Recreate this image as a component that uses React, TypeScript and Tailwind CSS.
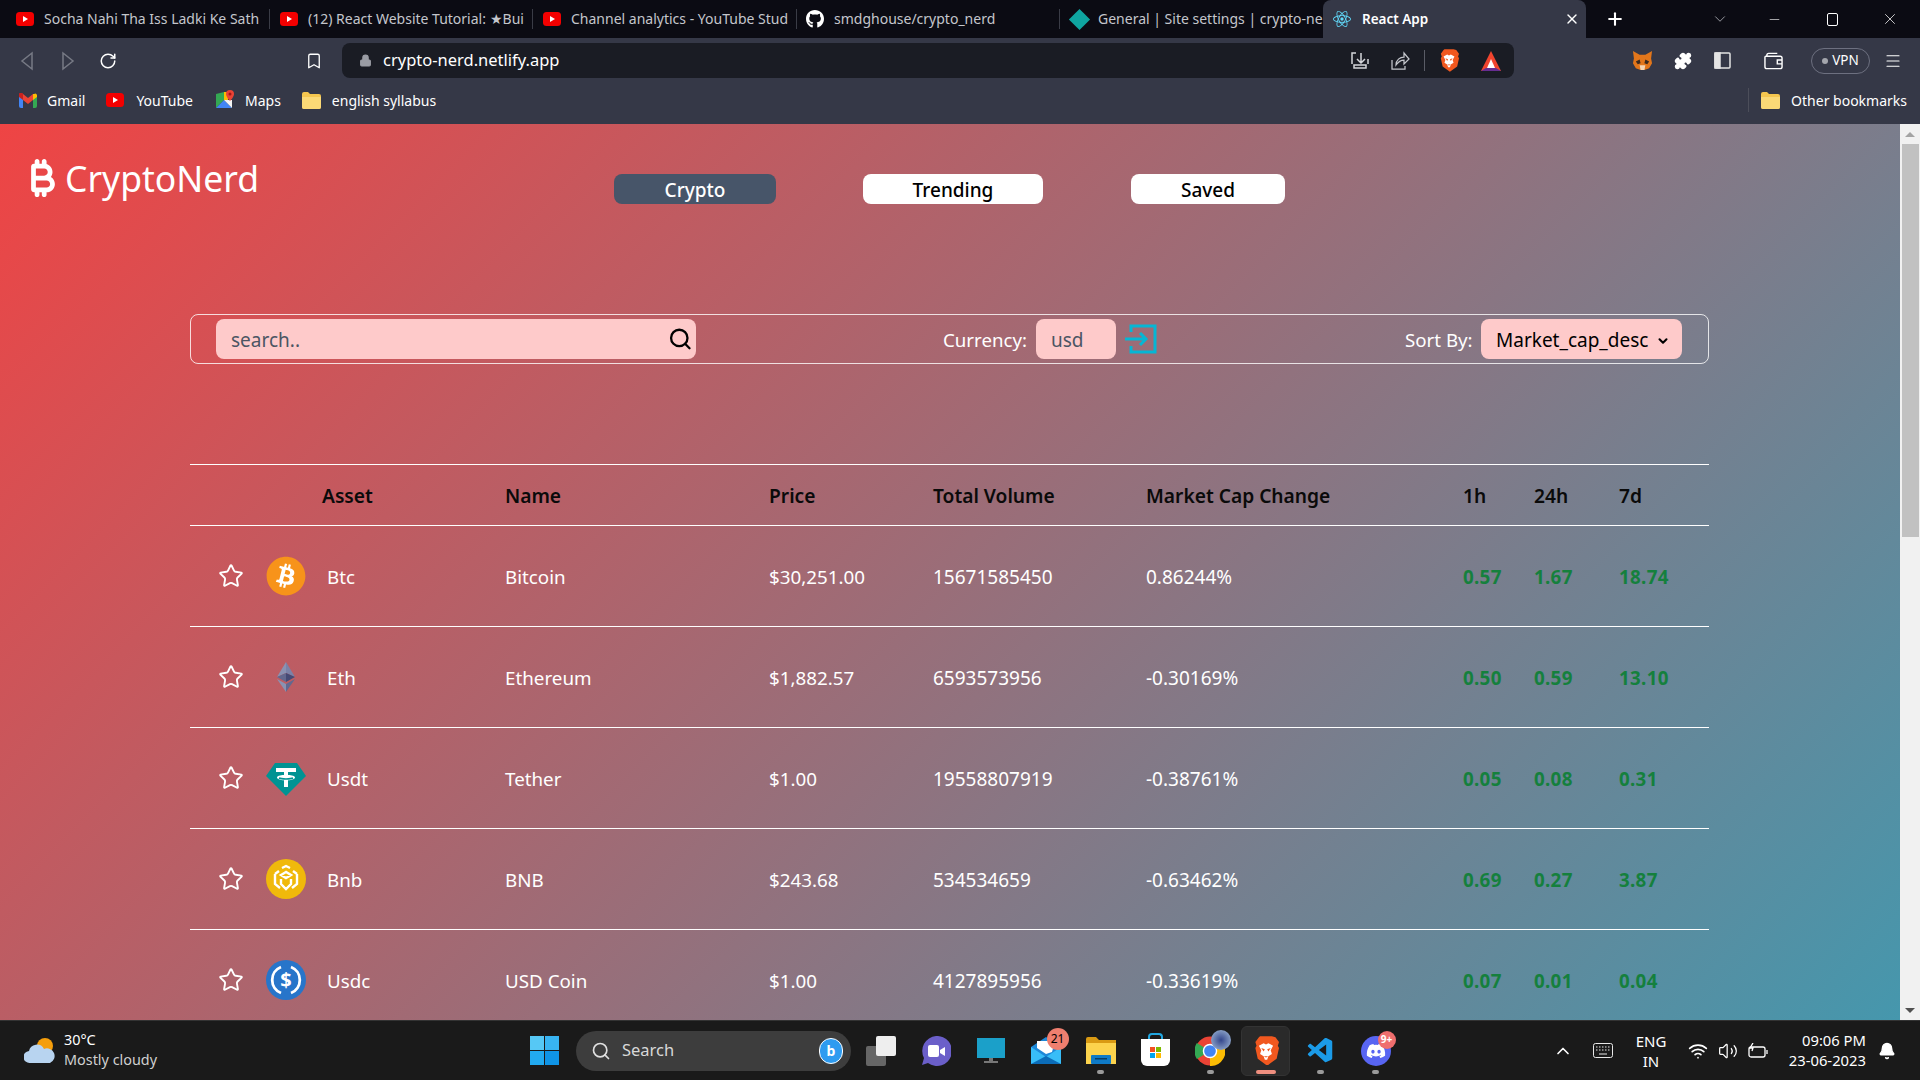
import React from "react";
import { Bell, ChevronDown, ChevronUp, Lock, Bookmark, Menu, Minus, Plus, RotateCw, Search, Star, Volume2, Wifi, X, Puzzle } from "lucide-react";
import { FaBitcoin, FaGithub, FaBitcoinSign, FaDiscord } from "react-icons/fa6";
import { SiReact } from "react-icons/si";
import { VscVscode } from "react-icons/vsc";

const font = { fontFamily: '"Noto Sans", sans-serif' };

const coins = [
  { sym: "Btc", name: "Bitcoin", price: "$30,251.00", vol: "15671585450", cap: "0.86244%", h1: "0.57", h24: "1.67", d7: "18.74" },
  { sym: "Eth", name: "Ethereum", price: "$1,882.57", vol: "6593573956", cap: "-0.30169%", h1: "0.50", h24: "0.59", d7: "13.10" },
  { sym: "Usdt", name: "Tether", price: "$1.00", vol: "19558807919", cap: "-0.38761%", h1: "0.05", h24: "0.08", d7: "0.31" },
  { sym: "Bnb", name: "BNB", price: "$243.68", vol: "534534659", cap: "-0.63462%", h1: "0.69", h24: "0.27", d7: "3.87" },
  { sym: "Usdc", name: "USD Coin", price: "$1.00", vol: "4127895956", cap: "-0.33619%", h1: "0.07", h24: "0.01", d7: "0.04" },
];

const Yt = () => (
  <svg width="18" height="14" viewBox="0 0 18 14" className="shrink-0">
    <rect width="18" height="14" rx="3.5" fill="#f40000" />
    <path d="M7 4l5 3-5 3z" fill="#fff" />
  </svg>
);

const Folder = () => (
  <svg width="19" height="17" viewBox="0 0 19 17" className="shrink-0">
    <path d="M0 2a2 2 0 012-2h4l2 2h9a2 2 0 012 2v11a2 2 0 01-2 2H2a2 2 0 01-2-2z" fill="#f5c64f" />
    <path d="M0 5h19v10a2 2 0 01-2 2H2a2 2 0 01-2-2z" fill="#fbd976" />
  </svg>
);

const Gmail = () => (
  <svg width="18" height="15" viewBox="0 0 18 15" className="shrink-0">
    <path d="M0 2v11a2 2 0 002 2h2V6z" fill="#4285f4" />
    <path d="M18 2v11a2 2 0 01-2 2h-2V6z" fill="#34a853" />
    <path d="M14 1v6l4-3V2a2 2 0 00-3-1z" fill="#fbbc04" />
    <path d="M4 7V1l5 4 5-4v6l-5 4z" fill="#ea4335" />
    <path d="M0 2v2l4 3V1a2 2 0 00-4 1z" fill="#c5221f" />
  </svg>
);

const Maps = () => (
  <svg width="18" height="20" viewBox="0 0 18 20" className="shrink-0">
    <path d="M0 4l8-2v8L0 18z" fill="#34a853" />
    <path d="M0 18l8-8 8 8z" fill="#4285f4" />
    <path d="M8 10l8 8V10z" fill="#f4f4f4" />
    <path d="M8 2l4 0v8H8z" fill="#fbbc04" />
    <path d="M14 0a4 4 0 014 4c0 3-4 7-4 7s-4-4-4-7a4 4 0 014-4z" fill="#ea4335" />
    <circle cx="14" cy="4" r="1.5" fill="#a31515" />
  </svg>
);

const Brave = ({ size = 20 }: { size?: number }) => (
  <svg width={size} height={size * 1.15} viewBox="0 0 22 25" className="shrink-0">
    <path d="M6 0h10l3 1 3 4-1 3 1 2-2 9-8 6-8-6-2-9 1-2-1-3 3-4z" fill="#f1581f" />
    <path d="M5 8l4-2 2 1 2-1 4 2-2 4 1 3-3 2-1 3h-2l-1-3-3-2 1-3z" fill="#fff" />
    <path d="M7 10l3 1-1 2zM15 10l-3 1 1 2z" fill="#f1581f" />
    <path d="M9 17h4l-2 1z" fill="#f1581f" />
  </svg>
);

const Tab = ({ icon, label, w, last }: { icon: React.ReactNode; label: string; w: string; last?: boolean }) => (
  <div className={`flex items-center h-[38px] overflow-hidden ${w}`}>
    <div className="flex h-[18px] w-full items-center">
      <div className="w-[18px] flex justify-center shrink-0">{icon}</div>
      <span className="ml-[10px] -mt-[1px] text-[14px] text-[#c4c6cc] whitespace-nowrap overflow-hidden w-full">{label}</span>
      {!last && <div className="w-px h-[20px] bg-[#3a3c46] shrink-0" />}
    </div>
  </div>
);

const Browser = () => (
  <div className="bg-[#353847]">
    <div className="flex h-[38px] bg-[#0b0b13] items-center">
      <Tab w="w-[270px] pl-[16px]" icon={<Yt />} label="Socha Nahi Tha Iss Ladki Ke Sath" />
      <Tab w="w-[263px] pl-[10px]" icon={<Yt />} label="(12) React Website Tutorial: ★Bui" />
      <Tab w="w-[264px] pl-[10px]" icon={<Yt />} label="Channel analytics - YouTube Stud" />
      <Tab w="w-[263px] pl-[9px]" icon={<FaGithub className="text-white" size={20} />} label="smdghouse/crypto_nerd" />
      <Tab w="w-[263px] pl-[10px]" last icon={<div className="w-[15px] h-[15px] rotate-45 bg-[#0fa5a0]" />} label="General | Site settings | crypto-ne" />
      <div className="flex items-center w-[263px] h-[38px] bg-[#353847] rounded-t-lg pl-[10px] pr-[6px]">
        <SiReact className="text-[#61dafb]" size={18} />
        <span className="ml-[11px] text-[13.5px] font-semibold text-white">React App</span>
        <X className="ml-auto text-white" size={16} />
      </div>
      <Plus className="ml-[19px] text-white" size={20} strokeWidth={2.5} />
      <ChevronDown className="ml-[86px] text-[#c4c6cc]" size={18} strokeWidth={1} />
      <Minus className="ml-[38px] text-white" size={15} strokeWidth={1} />
      <div className="ml-[45px] w-[11px] h-[13px] border border-white rounded-[2px]" />
      <X className="ml-[43px] text-white" size={18} strokeWidth={1} />
    </div>
    <div className="flex h-[45px] items-center">
      <svg width="14" height="20" viewBox="0 0 14 20" className="ml-[20px]" fill="none" stroke="#777a85" strokeWidth="1.5">
        <path d="M12 2L2 10l10 8z" />
      </svg>
      <svg width="14" height="20" viewBox="0 0 14 20" className="ml-[27px]" fill="none" stroke="#777a85" strokeWidth="1.5">
        <path d="M2 2l10 8-10 8z" />
      </svg>
      <RotateCw className="ml-[24px] text-white" size={18} strokeWidth={2} />
      <Bookmark className="ml-[188px] text-white" size={18} strokeWidth={1.75} />
      <div className="ml-[19px] flex items-center w-[1172px] h-[35px] bg-[#1a1c24] rounded-lg pl-[17px]">
        <Lock className="text-[#9a9ca4] fill-[#9a9ca4]" size={13} />
        <span className="ml-[11px] text-[16.5px] text-white">crypto-nerd.netlify.app</span>
        <svg width="18" height="20" viewBox="0 0 18 20" className="ml-[792px]" fill="none" stroke="#d4d5d9" strokeWidth="1.5">
          <path d="M1 13V2h4M17 8v5M10 2v10M6 8l4 4 4-4M3 14h12v3H3z" />
        </svg>
        <svg width="19" height="20" viewBox="0 0 19 20" className="ml-[22px]" fill="none" stroke="#c4c6cc" strokeWidth="1.25">
          <path d="M1 9v9h13v-3M5 14c0-5 4-8 8-8V2l5 6-5 5V9c-3 0-6 2-8 5z" />
        </svg>
        <div className="ml-[14px] w-px h-[21px] bg-[#5a5c66]" />
        <div className="ml-[14px]">
          <Brave />
        </div>
        <svg width="22" height="22" viewBox="0 0 22 22" className="ml-[21px]">
          <path d="M11 1l10 20H1z" fill="#f1442e" />
          <path d="M1 21l5-3h10l5 3z" fill="#662d91" />
          <path d="M11 9l4 9H7z" fill="#fff" />
        </svg>
      </div>
      <svg width="21" height="21" viewBox="0 0 22 22" className="ml-[118px]">
        <path d="M1 1l7 4h6l7-4-1 8 1 5-3 5-5 2h-4l-5-2-3-5 1-5z" fill="#e2761b" />
        <path d="M4 12l4-2 1 4-3 1zM18 12l-4-2-1 4 3 1z" fill="#3b2a1f" />
        <path d="M8 16h6l-1 5H9z" fill="#f5d6b5" />
      </svg>
      <Puzzle className="ml-[21px] text-white fill-white" size={18} />
      <svg width="17" height="17" viewBox="0 0 17 17" className="ml-[22px]" fill="none" stroke="#e4e4e4" strokeWidth="1.5">
        <rect x="1" y="1" width="15" height="15" rx="1" />
        <rect x="1" y="1" width="5" height="15" fill="#e4e4e4" />
      </svg>
      <svg width="19" height="18" viewBox="0 0 20 18" className="ml-[33px]" fill="none" stroke="#fff" strokeWidth="1.5">
        <path d="M3 4V3a2 2 0 012-2h9M1 5a1 1 0 011-1h15a2 2 0 012 2v9a2 2 0 01-2 2H3a2 2 0 01-2-2zM19 8h-5v4h5" />
      </svg>
      <div className="ml-[28px] flex items-center justify-center w-[59px] h-[26px] rounded-full border border-[#6d7080] text-[13.5px] text-white gap-[4px]">
        <span className="w-[6px] h-[6px] rounded-full bg-[#a4a6ad]" />
        VPN
      </div>
      <Menu className="ml-[14px] text-white" size={18} strokeWidth={1.5} />
    </div>
    <div className="flex h-[41px] items-center pb-[7px] text-[14px] text-white">
      <div className="ml-[19px]">
        <Gmail />
      </div>
      <span className="ml-[10px]">Gmail</span>
      <div className="ml-[21px]">
        <Yt />
      </div>
      <span className="ml-[12px]">YouTube</span>
      <div className="ml-[23px]">
        <Maps />
      </div>
      <span className="ml-[11px]">Maps</span>
      <div className="ml-[21px]">
        <Folder />
      </div>
      <span className="ml-[11px]">english syllabus</span>
      <div className="ml-auto w-px h-[24px] bg-[#4c4e5a]" />
      <div className="ml-[12px]">
        <Folder />
      </div>
      <span className="ml-[11px] mr-[13px]">Other bookmarks</span>
    </div>
  </div>
);

const CoinIcon = ({ sym }: { sym: string }) => {
  if (sym === "Btc")
    return (
      <div className="relative w-[40px] h-[40px]">
        <div className="absolute inset-[6px] rounded-full bg-white" />
        <FaBitcoin className="relative text-[#f7931a]" size={40} />
      </div>
    );
  if (sym === "Eth")
    return (
      <svg width="40" height="40" viewBox="0 0 40 40">
        <path d="M20 5l-9 15 9-4z" fill="#8a92b2" />
        <path d="M20 5l9 15-9-4z" fill="#7b82a8" />
        <path d="M11 20l9 5V16z" fill="#62688f" />
        <path d="M29 20l-9 5V16z" fill="#454a75" />
        <path d="M11 22l9 13v-8z" fill="#8a92b2" />
        <path d="M29 22l-9 13v-8z" fill="#62688f" />
      </svg>
    );
  if (sym === "Usdt")
    return (
      <svg width="40" height="40" viewBox="0 0 40 40">
        <path d="M9 5h22l9 13-20 20L0 18z" fill="#009393" />
        <path d="M10 10h20v4h-8v3c4 0 7 1 7 2.500s-3 2.500-7 2.800V29h-4v-6.700c-4-.3-7-1.300-7-2.800s3-2.500 7-2.500v-3h-8z" fill="#fff" />
        <path d="M13 20c2 1.200 12 1.200 14 0" stroke="#009393" strokeWidth="1.500" fill="none" />
      </svg>
    );
  if (sym === "Bnb")
    return (
      <svg width="40" height="40" viewBox="0 0 40 40">
        <circle cx="20" cy="20" r="20" fill="#f0b90b" />
        <path
          d="M16 9l4-2 4 2M20 13l-5 3 5 3 5-3zM9 15v10l5 4M31 15v10l-5 4M15 20v5l5 5 5-5v-5M9 15l4-3M31 15l-4-3"
          stroke="#fff"
          strokeWidth="2.400"
          fill="none"
        />
      </svg>
    );
  return (
    <svg width="40" height="40" viewBox="0 0 40 40">
      <circle cx="20" cy="20" r="20" fill="#2775ca" />
      <path d="M15 7a14 14 0 000 26M25 7a14 14 0 010 26" stroke="#fff" strokeWidth="2.800" fill="none" />
      <text x="20" y="27" textAnchor="middle" fontSize="20" fontWeight="700" fill="#fff" fontFamily="Noto Sans">
        $
      </text>
    </svg>
  );
};

const Page = () => (
  <div className="min-h-[1960px] bg-[linear-gradient(to_bottom_right,#ef4444,#06b6d4)]" style={font}>
    <div className="flex h-[80px] pl-[24px]">
      <div className="flex items-center w-[590px] h-[50px] mt-[29px] text-white">
        <FaBitcoinSign size={38} />
        <span className="ml-[3px] text-[35.5px] leading-[50px]">CryptoNerd</span>
      </div>
      <button className="w-[162px] h-[30px] mt-[50px] bg-[#475569] text-white text-[19px] font-medium rounded-lg leading-[32px]">Crypto</button>
      <button className="ml-[87px] w-[180px] h-[30px] mt-[50px] bg-white text-black text-[19px] font-medium rounded-lg leading-[32px]">Trending</button>
      <button className="ml-[88px] w-[154px] h-[30px] mt-[50px] bg-white text-black text-[19px] font-medium rounded-lg leading-[32px]">Saved</button>
    </div>
    <div className="ml-[190px] mt-[110px] w-[1519px] h-[50px] border border-white/80 rounded-lg flex items-center pl-[25px]">
      <div className="flex items-center w-[480px] h-[40px] bg-[#fecaca] rounded-lg pl-[15px] pr-[3px]">
        <input placeholder="search.." className="w-full text-[19px] pt-[3px] outline-none placeholder:text-[#4b5563]" style={font} />
        <Search className="text-black" size={26} strokeWidth={2.25} />
      </div>
      <span className="ml-[247px] pt-[3px] w-[85px] whitespace-nowrap text-[18.7px] text-white">Currency:</span>
      <div className="ml-[8px] flex items-center w-[80px] h-[40px] bg-[#fecaca] rounded-lg pl-[15px] pt-[3px] text-[19px] text-[#4b5563]">usd</div>
      <svg width="32" height="30" viewBox="0 0 32 30" className="ml-[9px]" fill="none" stroke="#06b6d4" strokeWidth="3">
        <path d="M6 8V2h24v26H6v-6M0 15h21M15 9l6 6-6 6" />
      </svg>
      <span className="ml-[248px] pt-[3px] w-[68px] whitespace-nowrap text-[18.7px] text-white">Sort By:</span>
      <div className="ml-[8px] flex items-center w-[201px] h-[40px] bg-[#fecaca] rounded-lg pl-[15px] pt-[3px] text-[19px] text-black">
        Market_cap_desc
        <ChevronDown className="ml-[8px]" size={14} strokeWidth={3.5} />
      </div>
    </div>
    <div className="ml-[190px] mt-[100px] w-[1519px] border-t border-white">
      <div className="grid h-[61px] pt-[2px] items-center border-b border-white text-[19.2px] font-semibold text-[#0a0a0a] grid-cols-[132px_183px_264px_164px_213px_317px_71px_85px_90px]">
        <span />
        <span>Asset</span>
        <span>Name</span>
        <span>Price</span>
        <span>Total Volume</span>
        <span>Market Cap Change</span>
        <span>1h</span>
        <span>24h</span>
        <span>7d</span>
      </div>
      {coins.map((c) => (
        <div key={c.sym} className="grid h-[101px] pt-[2px] items-center border-b border-white text-[18.8px] text-white grid-cols-[137px_178px_264px_164px_213px_317px_71px_85px_90px]">
          <div className="flex items-center pl-[28px]">
            <Star size={26} strokeWidth={1.75} className="shrink-0 -mt-[3px]" />
            <div className="ml-[22px] shrink-0 -mt-[2px]">
              <CoinIcon sym={c.sym} />
            </div>
          </div>
          <span>{c.sym}</span>
          <span>{c.name}</span>
          <span>{c.price}</span>
          <span className="text-[19px]">{c.vol}</span>
          <span className="text-[19px]">{c.cap}</span>
          <span className="font-bold tracking-[0.3px] text-[#15803d]">{c.h1}</span>
          <span className="font-bold tracking-[0.3px] text-[#15803d]">{c.h24}</span>
          <span className="font-bold tracking-[0.3px] text-[#15803d]">{c.d7}</span>
        </div>
      ))}
    </div>
  </div>
);

const Scrollbar = () => (
  <div className="flex flex-col items-center w-[20px] shrink-0 bg-[#f1f1f1]">
    <div className="h-[20px] flex items-center justify-center">
      <div className="w-0 h-0 border-x-[5px] border-x-transparent border-b-[5px] border-b-[#a3a3a3]" />
    </div>
    <div className="w-[17px] h-[393px] bg-[#c1c1c1]" />
    <div className="mt-auto h-[20px] flex items-center justify-center">
      <div className="w-0 h-0 border-x-[5px] border-x-transparent border-t-[5px] border-t-[#505050]" />
    </div>
  </div>
);

const Slot = ({ children, running }: { children: React.ReactNode; running?: boolean }) => (
  <div className="relative flex items-center justify-center w-[55px] h-[50px] shrink-0">
    {children}
    {running && <span className="absolute bottom-[2px] w-[7px] h-[4px] rounded-full bg-[#9a9a9a]" />}
  </div>
);

const Taskbar = () => (
  <div className="flex items-center h-[60px] bg-[#1a1a1a] border-t border-[#333] text-white shrink-0">
    <svg width="32" height="28" viewBox="0 0 32 28" className="ml-[24px]">
      <circle cx="21" cy="9" r="8" fill="#f59e0b" />
      <path d="M6 26a6 6 0 01-1-12 8 8 0 0115-2 7 7 0 016 14z" fill="#b8d4f0" />
    </svg>
    <div className="ml-[8px] -mt-[2px] text-[14.4px] leading-[20px] w-[180px]">
      <div>30°C</div>
      <div className="text-[#d0d0d0]">Mostly cloudy</div>
    </div>
    <svg width="29" height="29" viewBox="0 0 29 29" className="ml-[286px]">
      <rect width="14" height="14" fill="#56c8f5" />
      <rect x="15" width="14" height="14" fill="#38b4f2" />
      <rect y="15" width="14" height="14" fill="#22aaf0" />
      <rect x="15" y="15" width="14" height="14" fill="#0f94e6" />
    </svg>
    <div className="ml-[17px] flex items-center w-[275px] h-[40px] rounded-full bg-[#3d3d3d] pl-[15px]">
      <Search size={20} className="text-[#e0e0e0]" />
      <span className="ml-[11px] text-[16.5px] text-[#d8d8d8]">Search</span>
      <div className="ml-auto mr-[8px] flex items-center justify-center w-[24px] h-[26px] rounded-full bg-[#2e9bf0] border border-white text-[14px] font-bold text-white">b</div>
    </div>
    <div className="relative ml-[15px] w-[30px] h-[30px]">
      <div className="absolute left-0 bottom-0 w-[20px] h-[20px] bg-[#666] rounded-[2px]" />
      <div className="absolute right-0 top-0 w-[20px] h-[20px] bg-[#eee] rounded-[2px]" />
    </div>
    <div className="flex ml-[12px]">
      <Slot>
        <svg width="30" height="30" viewBox="0 0 30 30">
          <path d="M15 0a15 15 0 11-8 27l-6 2 2-7A15 15 0 0115 0z" fill="#6b5fc9" />
          <rect x="7" y="9" width="11" height="12" rx="2" fill="#fff" />
          <path d="M19 14l5-3v9l-5-3z" fill="#fff" />
        </svg>
      </Slot>
      <Slot>
        <svg width="28" height="26" viewBox="0 0 28 26">
          <rect x="0" y="0" width="28" height="20" fill="#1ba0c9" />
          <path d="M12 20h4v3h5v2H7v-2h5z" fill="#777" />
        </svg>
      </Slot>
      <Slot>
        <div className="relative">
          <svg width="30" height="27" viewBox="0 0 30 27">
            <path d="M15 0L0 10v17h30V10z" fill="#1e88d8" />
            <path d="M6 4h18l-3 11-6 2-9-6z" fill="#fff" />
            <path d="M0 10l15 10 15-10v17H0z" fill="#38bdf8" />
            <path d="M0 27l15-8 15 8z" fill="#0b6cb8" />
          </svg>
          <span className="absolute -top-[9px] -right-[8px] flex items-center justify-center w-[22px] h-[22px] rounded-full bg-[#ef7f6f] text-black text-[12px]">21</span>
        </div>
      </Slot>
      <Slot running>
        <svg width="30" height="27" viewBox="0 0 30 27">
          <path d="M0 2a2 2 0 012-2h8l3 3h17v24H0z" fill="#d99a13" />
          <path d="M0 6h30v21H0z" fill="#fcd34d" />
          <rect x="5" y="18" width="20" height="9" rx="1" fill="#0f7ac6" />
          <rect x="9" y="21" width="12" height="1.500" fill="#073d66" />
        </svg>
      </Slot>
      <Slot>
        <div className="relative flex items-center justify-center w-[29px] h-[27px] mt-[3px] rounded-b-md bg-white">
          <div className="absolute -top-[6px] left-[7px] w-[15px] h-[6px] rounded-t-sm border-2 border-b-0 border-[#22a7e0]" />
          <div className="grid grid-cols-2 gap-[1px]">
            <div className="w-[5px] h-[5px] bg-[#f25022]" />
            <div className="w-[5px] h-[5px] bg-[#7fba00]" />
            <div className="w-[5px] h-[5px] bg-[#00a4ef]" />
            <div className="w-[5px] h-[5px] bg-[#ffb900]" />
          </div>
        </div>
      </Slot>
      <Slot running>
        <div className="relative -ml-[2px]">
          <svg width="30" height="30" viewBox="0 0 32 32">
            <circle cx="16" cy="16" r="15.500" fill="#ea4335" />
            <path d="M16 16L2 24.500A16 16 0 012 7.500z" fill="#34a853" />
            <path d="M16 16l14-8.500A16 16 0 0116 32z" fill="#fbbc04" />
            <circle cx="16" cy="16" r="7" fill="#4285f4" stroke="#fff" strokeWidth="1.500" />
          </svg>
          <span className="absolute -top-[6px] -right-[6px] w-[20px] h-[20px] rounded-full bg-[radial-gradient(circle,#33468c,#a7c0dc)]" />
        </div>
      </Slot>
      <Slot>
        <div className="relative flex items-center justify-center w-[49px] h-[50px] rounded-md bg-[#2a2a2a] border border-[#333]">
          <Brave size={26} />
          <span className="absolute bottom-[1px] w-[20px] h-[4px] rounded-full bg-[#ef8f7f]" />
        </div>
      </Slot>
      <Slot running>
        <VscVscode className="text-[#1b9be8]" size={30} />
      </Slot>
      <Slot running>
        <div className="relative flex items-center justify-center w-[30px] h-[30px] rounded-full bg-[#5865f2]">
          <FaDiscord size={20} />
          <span className="absolute -top-[5px] -right-[5px] flex items-center justify-center w-[18px] h-[18px] rounded-full bg-[#ef6e6e] text-[10px] font-bold">9+</span>
        </div>
      </Slot>
    </div>
    <ChevronUp className="ml-[150px]" size={20} strokeWidth={2} />
    <svg width="20" height="15" viewBox="0 0 20 15" className="ml-[20px]" fill="none" stroke="#e8e8e8">
      <rect x="0.500" y="0.500" width="19" height="14" rx="2" />
      <path d="M3 4h14M3 7h14" strokeDasharray="1.500 1.500" />
      <path d="M6 11h8" />
    </svg>
    <div className="ml-[18px] w-[40px] text-center text-[15px] leading-[20px]">
      <div>ENG</div>
      <div>IN</div>
    </div>
    <Wifi className="ml-[17px]" size={20} />
    <Volume2 className="ml-[10px]" size={20} strokeWidth={1.5} />
    <svg width="20" height="16" viewBox="0 0 20 16" className="ml-[10px]" fill="none" stroke="#fff" strokeWidth="1.3">
      <rect x="1" y="4" width="16" height="10" rx="2" />
      <path d="M19 7v4" />
      <path d="M5 0L2 5h3l-1 3" />
    </svg>
    <div className="ml-[8px] -mt-[2px] w-[90px] text-right text-[14.8px] leading-[20px] whitespace-nowrap">
      <div>09:06 PM</div>
      <div>23-06-2023</div>
    </div>
    <Bell className="ml-[12px] fill-white" size={18} />
  </div>
);

export default function App() {
  return (
    <div className="flex flex-col w-[1920px] h-[1080px] overflow-hidden" style={font}>
      <Browser />
      <div className="flex flex-1 min-h-0">
        <div className="flex-1 overflow-hidden">
          <Page />
        </div>
        <Scrollbar />
      </div>
      <Taskbar />
    </div>
  );
}
